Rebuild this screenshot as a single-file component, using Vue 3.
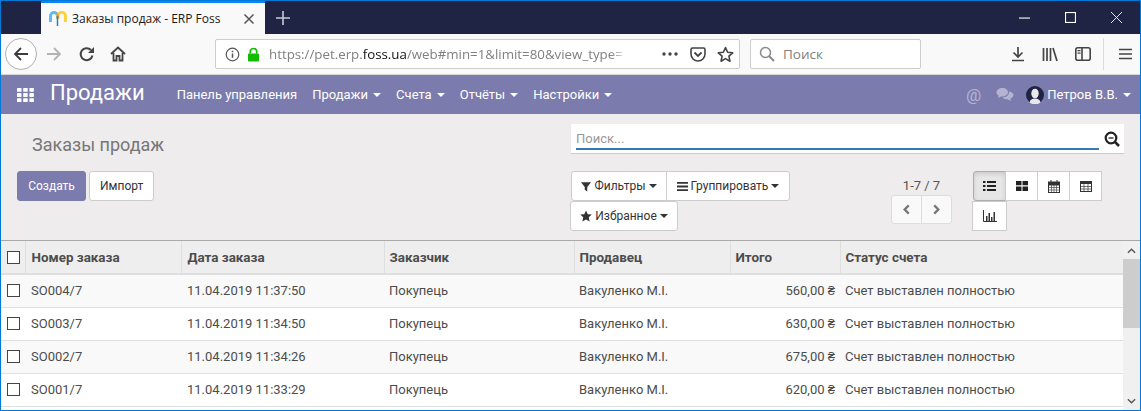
<template>
  <div class="window">
    <div class="titlebar">
      <div class="tab">
        <svg class="favicon" viewBox="0 0 18 17" width="18" height="17">
          <path d="M1.500 12V6a3.500 3.500 0 0 1 7 0v3" fill="none" stroke="#5cbcf0" stroke-width="3" />
          <path d="M9 9V6a3.700 3.700 0 0 1 7.400 0v6" fill="none" stroke="#fbd23c" stroke-width="3" />
          <path d="M8 3.500c1 1 1 2.500 1 4" fill="none" stroke="#f59a23" stroke-width="2" />
          <path d="M8.500 6v10" stroke="#2d7fc4" stroke-width="1.500" />
        </svg>
        <span class="tab-title">Заказы продаж - ERP Foss</span>
        <svg class="tab-close" viewBox="0 0 12 12" width="12" height="12">
          <path d="M1.500 1.500l9 9M10.500 1.500l-9 9" stroke="#555" stroke-width="1.500" />
        </svg>
      </div>
      <svg class="new-tab" viewBox="0 0 14 14" width="14" height="14">
        <path d="M7 0v14M0 7h14" stroke="#c8cad4" stroke-width="1.600" />
      </svg>
      <div class="win-buttons">
        <svg viewBox="0 0 10 10" width="11" height="11"><path d="M0 5.500h10" stroke="#fff" /></svg>
        <svg viewBox="0 0 10 10" width="11" height="11"><rect x=".5" y=".5" width="9" height="9" fill="none" stroke="#fff" /></svg>
        <svg viewBox="0 0 10 10" width="11" height="11"><path d="M0 0l10 10M10 0L0 10" stroke="#fff" stroke-width=".8" /></svg>
      </div>
    </div>

    <div class="toolbar">
      <div class="back">
        <svg viewBox="0 0 16 16" width="16" height="16">
          <path d="M15 8H2M8 2L2 8l6 6" fill="none" stroke="#3c3c3c" stroke-width="1.800" />
        </svg>
      </div>
      <svg class="tool forward" viewBox="0 0 16 16" width="16" height="16">
        <path d="M1 8h13M8 2l6 6-6 6" fill="none" stroke="#b4b4b4" stroke-width="1.800" />
      </svg>
      <svg class="tool reload" viewBox="0 0 16 16" width="16" height="16">
        <path d="M13.500 9.500A6 6 0 1 1 12 4" fill="none" stroke="#444" stroke-width="2" />
        <path d="M15 1v6H9z" fill="#444" />
      </svg>
      <svg class="tool home" viewBox="0 0 16 16" width="16" height="16">
        <path d="M1 8l7-6.500L15 8M3.500 7v7.500h3V10h3v4.500h3V7" fill="none" stroke="#444" stroke-width="1.800" />
      </svg>
      <div class="urlbar">
        <svg viewBox="0 0 16 16" width="15" height="15">
          <circle cx="8" cy="8" r="6.700" fill="none" stroke="#555" stroke-width="1.300" />
          <path d="M8 7v4.500M8 4v1.600" stroke="#555" stroke-width="1.600" />
        </svg>
        <svg class="lock" viewBox="0 0 14 16" width="13" height="15">
          <rect x="1" y="7" width="12" height="8.500" rx="1" fill="#12bc00" />
          <path d="M3.500 7V5a3.500 3.500 0 0 1 7 0v2" fill="none" stroke="#12bc00" stroke-width="1.800" />
        </svg>
        <span class="url">https://pet.erp.<b>foss.ua</b>/web#min=1&amp;limit=80&amp;view_type=</span>
        <svg class="dots" viewBox="0 0 16 4" width="16" height="4">
          <circle cx="2" cy="2" r="1.700" fill="#444" />
          <circle cx="8" cy="2" r="1.700" fill="#444" />
          <circle cx="14" cy="2" r="1.700" fill="#444" />
        </svg>
        <svg class="pocket" viewBox="0 0 16 15" width="16" height="15">
          <path d="M1 2.500A1.500 1.500 0 0 1 2.500 1h11A1.500 1.500 0 0 1 15 2.500V7a7 7 0 0 1-14 0z" fill="none" stroke="#444" stroke-width="1.600" />
          <path d="M4.500 5.500L8 9l3.500-3.500" fill="none" stroke="#444" stroke-width="1.800" />
        </svg>
        <svg class="star" viewBox="0 0 16 16" width="17" height="17">
          <path d="M8 1.500l2 4.400 4.800.5-3.600 3.200 1 4.700L8 11.900l-4.200 2.400 1-4.700L1.200 6.400 6 5.900z" fill="none" stroke="#444" stroke-width="1.500" stroke-linejoin="round" />
        </svg>
      </div>
      <div class="searchbar">
        <svg viewBox="0 0 16 16" width="16" height="16">
          <circle cx="6.500" cy="6.500" r="5" fill="none" stroke="#8a8a8a" stroke-width="1.500" />
          <path d="M10 10l5 5" stroke="#8a8a8a" stroke-width="2" />
        </svg>
        <span>Поиск</span>
      </div>
      <div class="tool-right">
        <svg viewBox="0 0 14 16" width="14" height="16">
          <path d="M7 1v10M2.500 6.500L7 11l4.500-4.500M1 14.500h12" fill="none" stroke="#444" stroke-width="1.700" />
        </svg>
        <svg viewBox="0 0 16 15" width="16" height="15">
          <path d="M1.500 1v13M5 1v13M8.500 1v13M11 1l4 13" fill="none" stroke="#444" stroke-width="1.700" />
        </svg>
        <svg viewBox="0 0 16 14" width="16" height="14">
          <rect x=".8" y=".8" width="14.400" height="12.400" rx="2" fill="none" stroke="#444" stroke-width="1.600" />
          <path d="M7 1v12" stroke="#444" stroke-width="1.600" />
          <path d="M2.500 3h3v1.200h-3zM2.500 5.500h3v1.200h-3z" fill="#444" />
        </svg>
        <i class="tool-sep"></i>
        <svg viewBox="0 0 13 12" width="13" height="12">
          <path d="M0 1.500h13M0 6h13M0 10.500h13" stroke="#444" stroke-width="1.700" />
        </svg>
      </div>
    </div>

    <nav class="navbar">
      <svg class="apps" viewBox="0 0 17 14" width="17" height="14">
        <g fill="#fff">
          <rect v-for="c in appCells" :key="c.x + '-' + c.y" :x="c.x" :y="c.y" width="4.500" height="3.800" rx=".6" />
        </g>
      </svg>
      <span class="brand">Продажи</span>
      <span class="nav-item first">Панель управления</span>
      <span v-for="m in menu" :key="m" class="nav-item">{{ m }}<i class="caret"></i></span>
      <div class="nav-right">
        <span class="at">@</span>
        <svg class="chat" viewBox="0 0 18 15" width="18" height="15">
          <path d="M6.500 1C3 1 .5 3 .5 5.300c0 1.400.9 2.600 2.200 3.400L2 11l3-1.500c3.500.3 7-1.500 7-4.200C12 3 9.800 1 6.500 1z" fill="#b4b4d2" />
          <path d="M13 4.500c.5 3-2.500 6-6.500 6 1 1.300 3 2 5 1.800L15 14l-.6-2.400c1.800-.8 3.100-2 3.100-3.600 0-1.600-1.800-3-4.500-3.500z" fill="#b4b4d2" />
        </svg>
        <svg class="avatar" viewBox="0 0 18 18" width="18" height="18">
          <circle cx="9" cy="9" r="9" fill="#1f2344" />
          <ellipse cx="9" cy="7.500" rx="3.700" ry="4.800" fill="#e8e8e8" />
          <path d="M3.500 16.500c.6-3 2.600-4 5.500-4s4.900 1 5.500 4a9 9 0 0 1-11 0z" fill="#e8e8e8" />
        </svg>
        <span class="nav-item user">Петров В.В.<i class="caret"></i></span>
      </div>
    </nav>

    <section class="panel">
      <div class="panel-left">
        <h1 class="title">Заказы продаж</h1>
        <div class="actions">
          <button class="btn primary">Создать</button>
          <button class="btn">Импорт</button>
        </div>
      </div>
      <div class="panel-right">
        <div class="search">
          <span class="search-input">Поиск...</span>
          <svg class="search-icon" viewBox="0 0 16 16" width="16" height="16">
            <circle cx="7" cy="7" r="5.300" fill="none" stroke="#222" stroke-width="2.200" />
            <path d="M11 11l4 4" stroke="#222" stroke-width="2.500" />
            <path d="M4.500 7h5" stroke="#222" stroke-width="1.300" />
          </svg>
        </div>
        <div class="tools">
          <div class="filters">
            <div class="filter-row">
              <button class="btn flat filter1">
                <svg viewBox="0 0 12 12" width="10" height="11"><path d="M0 1h12L7.500 6.500V12l-3-2V6.500z" fill="#333" /></svg>
                Фильтры<i class="caret dark"></i>
              </button>
              <button class="btn flat filter2">
                <svg viewBox="0 0 12 12" width="11" height="11"><path d="M0 2h12M0 6h12M0 10h12" stroke="#333" stroke-width="2" /></svg>
                Группировать<i class="caret dark"></i>
              </button>
            </div>
            <button class="btn flat filter3">
              <svg viewBox="0 0 16 16" width="12" height="12"><path d="M8 .5l2.300 5 5.400.6-4 3.700 1.100 5.400L8 12.500 3.200 15.200l1.100-5.400-4-3.700 5.400-.6z" fill="#333" /></svg>
              Избранное<i class="caret dark"></i>
            </button>
          </div>
          <div class="pager">
            <span class="pager-text">1-7 / 7</span>
            <div class="pager-btns">
              <button class="page-btn">
                <svg viewBox="0 0 10 12" width="9" height="11"><path d="M7.500 1.500L3 6l4.500 4.500" fill="none" stroke="#777" stroke-width="2.600" /></svg>
              </button>
              <button class="page-btn">
                <svg viewBox="0 0 10 12" width="9" height="11"><path d="M2.500 1.500L7 6l-4.500 4.500" fill="none" stroke="#777" stroke-width="2.600" /></svg>
              </button>
            </div>
          </div>
          <div class="views">
            <div class="view-row">
              <button class="view-btn active">
                <svg viewBox="0 0 13 10" width="13" height="10"><path d="M0 1h2.500M4 1h9M0 5h2.500M4 5h9M0 9h2.500M4 9h9" stroke="#222" stroke-width="2" /></svg>
              </button>
              <button class="view-btn">
                <svg viewBox="0 0 12 10" width="12" height="10"><path d="M0 0h5.500v4.300H0zM6.500 0H12v4.300H6.500zM0 5.500h5.500V10H0zM6.500 5.500H12V10H6.500z" fill="#222" /></svg>
              </button>
              <button class="view-btn">
                <svg viewBox="0 0 12 13" width="12" height="13">
                  <rect x=".5" y="2" width="11" height="10.500" fill="none" stroke="#333" />
                  <path d="M0 2.500h12v2.500H0zM3 0v3M9 0v3" fill="#333" stroke="#333" />
                  <path d="M.5 7.500h11M.5 10h11M3.500 5v7.500M6 5v7.500M8.500 5v7.500" stroke="#333" stroke-width=".6" />
                </svg>
              </button>
              <button class="view-btn">
                <svg viewBox="0 0 12 11" width="12" height="11">
                  <rect x=".5" y=".5" width="11" height="10" fill="none" stroke="#333" />
                  <path d="M0 1h12v2H0z" fill="#333" />
                  <path d="M.5 5.500h11M.5 8h11M4 3v7.500M8 3v7.500" stroke="#333" stroke-width=".7" />
                </svg>
              </button>
            </div>
            <button class="view-btn chart">
              <svg viewBox="0 0 14 12" width="14" height="12">
                <path d="M.5 0v11.500H14" fill="none" stroke="#333" />
                <path d="M3 6h1.500v5H3zM5.500 3h1.500v8H5.500zM8 7h1.500v4H8zM10.500 2H12v9h-1.500z" fill="#333" />
              </svg>
            </button>
          </div>
        </div>
      </div>
    </section>

    <div class="list">
      <table class="orders">
        <colgroup>
          <col v-for="w in colWidths" :key="w.id" :style="{ width: w.px + 'px' }" />
        </colgroup>
        <thead>
          <tr>
            <th><i class="check"></i></th>
            <th v-for="h in headers" :key="h">{{ h }}</th>
          </tr>
        </thead>
        <tbody>
          <tr v-for="o in orders" :key="o.id">
            <td><i class="check"></i></td>
            <td>{{ o.id }}</td>
            <td>{{ o.date }}</td>
            <td>Покупець</td>
            <td>Вакуленко М.І.</td>
            <td class="num">{{ o.total }} ₴</td>
            <td>Счет выставлен полностью</td>
          </tr>
        </tbody>
      </table>
      <div class="scrollbar">
        <svg viewBox="0 0 10 6" width="9" height="6"><path d="M1 5l4-4 4 4" fill="none" stroke="#555" stroke-width="1.500" /></svg>
        <div class="thumb"></div>
        <svg class="down" viewBox="0 0 10 6" width="9" height="6"><path d="M1 1l4 4 4-4" fill="none" stroke="#555" stroke-width="1.500" /></svg>
      </div>
    </div>
  </div>
</template>

<script setup>
const menu = ['Продажи', 'Счета', 'Отчёты', 'Настройки']
const headers = ['Номер заказа', 'Дата заказа', 'Заказчик', 'Продавец', 'Итого', 'Статус счета']

const colWidths = [24, 156, 203, 190, 156, 110, 283].map((px, id) => ({ id, px }))

const orders = [
  { id: 'SO004/7', date: '11.04.2019 11:37:50', total: '560,00' },
  { id: 'SO003/7', date: '11.04.2019 11:34:50', total: '630,00' },
  { id: 'SO002/7', date: '11.04.2019 11:34:26', total: '675,00' },
  { id: 'SO001/7', date: '11.04.2019 11:33:29', total: '620,00' },
]

const appCells = []
for (let y = 0; y < 3; y++) {
  for (let x = 0; x < 3; x++) {
    appCells.push({ x: x * 6.2, y: y * 5.1 })
  }
}
</script>

<style>
html, body {
  margin: 0;
  overflow: hidden;
}
</style>

<style scoped>
.window {
  width: 1141px;
  height: 411px;
  box-sizing: border-box;
  border: 1px solid #0078d7;
  display: flex;
  flex-direction: column;
  overflow: hidden;
  background: #eeeced;
  font-family: Roboto, "Liberation Sans", sans-serif;
  font-size: 13px;
  color: #4c4c4c;
}

.titlebar {
  height: 33px;
  flex: none;
  background: #1f2344;
  display: flex;
  align-items: center;
}
.tab {
  width: 224px;
  height: 33px;
  margin-left: 40px;
  box-sizing: border-box;
  background: #f9f9f9;
  border-top: 2px solid #0a84ff;
  display: flex;
  align-items: center;
  padding: 0 10px 0 8px;
}
.favicon {
  flex: none;
}
.tab-title {
  margin-left: 5px;
  flex: 1;
  font-family: "Open Sans", sans-serif;
  font-size: 12px;
  color: #1a1a1a;
}
.new-tab {
  margin-left: 11px;
}
.win-buttons {
  margin-left: auto;
  display: flex;
  gap: 35px;
  padding-right: 18px;
}

.toolbar {
  height: 41px;
  flex: none;
  box-sizing: border-box;
  background: #f9f9f9;
  border-bottom: 1px solid #d6d6d6;
  display: flex;
  align-items: center;
  padding-left: 4px;
}
.back {
  width: 32px;
  height: 32px;
  box-sizing: border-box;
  border: 1px solid #b1b1b1;
  border-radius: 50%;
  background: #fff;
  display: flex;
  align-items: center;
  justify-content: center;
}
.tool {
  flex: none;
}
.forward {
  margin-left: 9px;
}
.reload {
  margin-left: 17px;
}
.home {
  margin-left: 15px;
}
.urlbar {
  width: 525px;
  height: 30px;
  margin-left: 89px;
  box-sizing: border-box;
  background: #fff;
  border: 1px solid #cdcdcd;
  border-radius: 2px;
  display: flex;
  align-items: center;
  padding-left: 9px;
}
.lock {
  margin-left: 7px;
}
.url {
  margin-left: 9px;
  width: 379px;
  white-space: nowrap;
  overflow: hidden;
  font-family: "Open Sans", sans-serif;
  font-size: 13.300px;
  color: #808080;
  -webkit-mask-image: linear-gradient(to right, #000 90%, rgba(0, 0, 0, 0.25) 93.500%);
  mask-image: linear-gradient(to right, #000 90%, rgba(0, 0, 0, 0.25) 93.500%);
}
.url b {
  font-weight: 400;
  color: #111;
}
.dots {
  margin-left: 14px;
}
.pocket {
  margin-left: 12px;
}
.star {
  margin-left: 11px;
}
.searchbar {
  width: 171px;
  height: 30px;
  margin-left: 10px;
  box-sizing: border-box;
  background: #fff;
  border: 1px solid #cdcdcd;
  border-radius: 2px;
  display: flex;
  align-items: center;
  padding-left: 8px;
  gap: 8px;
  font-family: "Open Sans", sans-serif;
  font-size: 13.500px;
  color: #808080;
}
.tool-right {
  margin-left: 90px;
  display: flex;
  align-items: center;
  gap: 17px;
}
.tool-sep {
  width: 1px;
  height: 32px;
  background: #dcdcdc;
  margin: 0 -2px 0 -5px;
}

.navbar {
  height: 39px;
  flex: none;
  background: #7c7bad;
  display: flex;
  align-items: center;
  padding-left: 16px;
  color: #fff;
}
.apps {
  flex: none;
}
.brand {
  margin-left: 16px;
  font-size: 22px;
  line-height: 26px;
  position: relative;
  top: -2px;
}
.nav-item {
  font-size: 13px;
  white-space: nowrap;
  margin-left: 15px;
}
.nav-item.first {
  margin-left: 32px;
}
.caret {
  display: inline-block;
  width: 0;
  height: 0;
  margin-left: 5px;
  vertical-align: 2px;
  border-top: 4px solid #fff;
  border-left: 4px solid transparent;
  border-right: 4px solid transparent;
}
.caret.dark {
  margin-left: 0;
  border-top-color: #333;
}
.nav-right {
  margin-left: auto;
  display: flex;
  align-items: center;
  padding-right: 9px;
}
.at {
  font-size: 17px;
  color: #b4b4d2;
}
.chat {
  margin-left: 15px;
}
.avatar {
  margin-left: 12px;
}
.nav-item.user {
  margin-left: 3px;
}

.panel {
  height: 127px;
  flex: none;
  box-sizing: border-box;
  display: flex;
  padding-top: 10px;
  border-bottom: 1px solid #a9a9a9;
}
.panel-left {
  width: 569px;
  flex: none;
}
.title {
  margin: 10px 0 0 31px;
  font-size: 18px;
  line-height: 22px;
  font-weight: 400;
  color: #777;
}
.actions {
  margin: 15px 0 0 16px;
  display: flex;
  gap: 3px;
}
.btn {
  height: 30px;
  box-sizing: border-box;
  padding: 0 10px;
  background: #fff;
  border: 1px solid #ccc;
  border-radius: 3px;
  font-family: inherit;
  font-size: 12px;
  color: #333;
}
.btn.primary {
  width: 69px;
  background: #7c7bad;
  border-color: #7c7bad;
  color: #fff;
}
.btn:not(.primary):not(.flat) {
  width: 65px;
}

.panel-right {
  flex: 1;
}
.search {
  width: 553px;
  height: 30px;
  margin-left: 1px;
  box-sizing: border-box;
  background: #fff;
  border-bottom: 1px solid #ccc;
  display: flex;
  align-items: flex-start;
}
.search-input {
  width: 523px;
  height: 26px;
  margin-left: 5px;
  box-sizing: border-box;
  border-bottom: 2px solid #337ab7;
  font-size: 13px;
  line-height: 29px;
  color: #999;
}
.search-icon {
  margin: 7px 0 0 5px;
}
.tools {
  display: flex;
  margin-top: 17px;
}
.filters {
  width: 311px;
  flex: none;
}
.filter-row {
  display: flex;
  padding-left: 1px;
}
.btn.flat {
  display: flex;
  align-items: center;
  justify-content: center;
  gap: 3px;
  padding: 0;
  font-size: 12px;
}
.filter1 {
  width: 96px;
  border-radius: 3px 0 0 3px;
}
.filter2 {
  width: 124px;
  margin-left: -1px;
  border-radius: 0 3px 3px 0;
}
.filter3 {
  width: 108px;
}
.pager {
  width: 81px;
  flex: none;
  display: flex;
  flex-direction: column;
  align-items: center;
  padding-top: 7px;
}
.pager-text {
  line-height: 16px;
  font-size: 13px;
  color: #555;
}
.pager-btns {
  display: flex;
  margin-top: 1px;
}
.page-btn {
  width: 31px;
  height: 29px;
  padding: 0;
  background: #f9f9f9;
  border: 1px solid #ddd;
  display: flex;
  align-items: center;
  justify-content: center;
}
.page-btn:first-child {
  border-radius: 3px 0 0 3px;
}
.page-btn:last-child {
  margin-left: -1px;
  border-radius: 0 3px 3px 0;
}
.views {
  margin-left: 10px;
}
.view-row {
  display: flex;
  padding-left: 1px;
}
.view-btn {
  width: 33px;
  height: 30px;
  margin-right: -1px;
  padding: 0;
  background: #fff;
  border: 1px solid #ccc;
  display: flex;
  align-items: center;
  justify-content: center;
}
.view-btn.active {
  background: #e6e6e6;
  border-color: #adadad;
  border-radius: 3px 0 0 3px;
  box-shadow: inset 0 2px 4px rgba(0, 0, 0, 0.12);
}
.view-btn.chart {
  width: 35px;
}

.list {
  flex: 1;
  min-height: 0;
  display: flex;
  background: #fff;
  overflow: hidden;
}
.orders {
  width: 1122px;
  flex: none;
  align-self: flex-start;
  table-layout: fixed;
  border-collapse: collapse;
  color: #4c4c4c;
}
.orders th {
  height: 33px;
  padding: 0 5px;
  box-sizing: border-box;
  text-align: left;
  background: #eee;
  border-left: 1px solid #dfdfdf;
  border-bottom: 2px solid #dfdfdf;
  font-size: 13.400px;
  font-weight: 700;
  color: #4c4c4c;
}
.orders th:first-child {
  border-left: 0;
}
.orders td {
  height: 33px;
  padding: 0 5px;
  box-sizing: border-box;
  border-bottom: 1px solid #dfdfdf;
  white-space: nowrap;
}
.orders th:nth-child(2),
.orders th:nth-child(3),
.orders td:nth-child(2),
.orders td:nth-child(3) {
  padding-left: 6px;
}
.orders tbody tr:nth-child(odd) td {
  background: #f9f9f9;
}
.orders td.num {
  text-align: right;
}
.check {
  display: block;
  width: 13px;
  height: 13px;
  margin-left: 1px;
  box-sizing: border-box;
  background: #fff;
  border: 1px solid #444;
}
.scrollbar {
  flex: 1;
  background: #f0f0f0;
  display: flex;
  flex-direction: column;
  align-items: center;
  padding-top: 7px;
  box-sizing: border-box;
}
.thumb {
  width: 100%;
  height: 69px;
  margin-top: 5px;
  background: #cdcdcd;
}
.down {
  margin-top: auto;
  margin-bottom: 6px;
}
</style>
